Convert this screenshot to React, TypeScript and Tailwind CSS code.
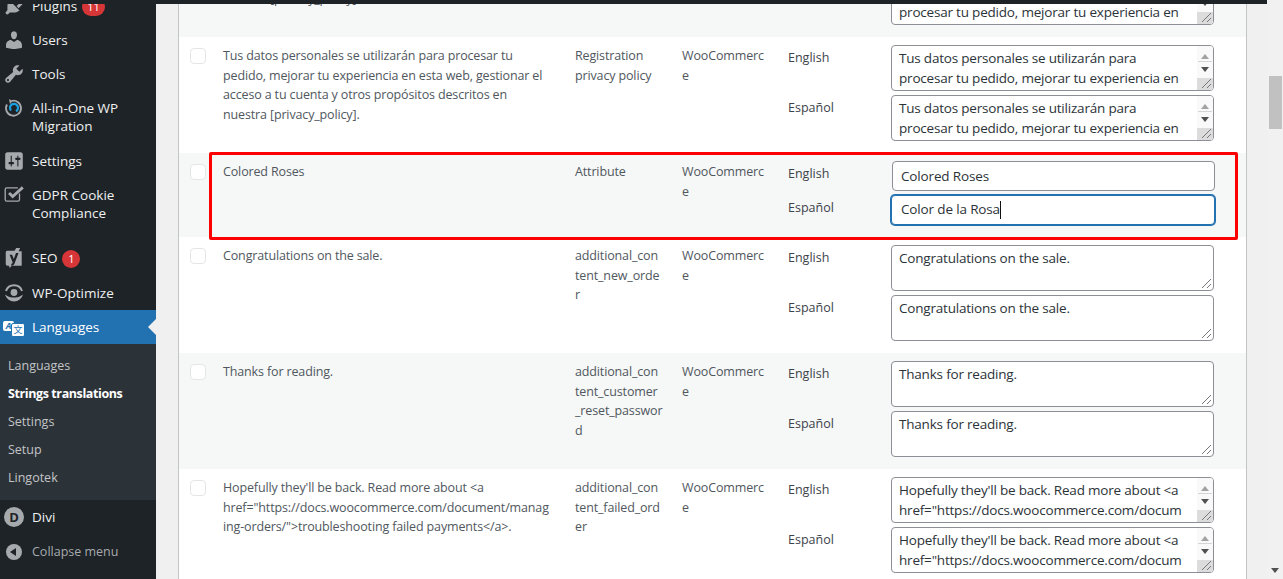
import { ReactNode } from "react"

const PERSONAL = "Tus datos personales se utilizarán para procesar tu pedido, mejorar tu experiencia en esta web, gestionar el acceso a tu cuenta y otros propósitos descritos en nuestra [privacy_policy]."
const HOPE = `Hopefully they'll be back. Read more about <a href="https://docs.woocommerce.com/document/managing-orders/">troubleshooting failed payments</a>.`

interface Row {
  text: string;
  name: string;
  en: string;
  es: string;
  kind: "scroll" | "plain" | "input";
  marked?: boolean;
}

// line feeds keep the long option names breaking where the admin table breaks them
const rows: Row[] = [
  { text: PERSONAL, name: "Checkout privacy policy", en: PERSONAL, es: PERSONAL, kind: "scroll" },
  { text: PERSONAL, name: "Registration privacy policy", en: PERSONAL, es: PERSONAL, kind: "scroll" },
  { text: "Colored Roses", name: "Attribute", en: "Colored Roses", es: "Color de la Rosa", kind: "input", marked: true },
  { text: "Congratulations on the sale.", name: "additional_con\ntent_new_orde\nr", en: "Congratulations on the sale.", es: "Congratulations on the sale.", kind: "plain" },
  { text: "Thanks for reading.", name: "additional_con\ntent_customer\n_reset_passwor\nd", en: "Thanks for reading.", es: "Thanks for reading.", kind: "plain" },
  { text: HOPE, name: "additional_con\ntent_failed_ord\ner", en: HOPE, es: HOPE, kind: "scroll" },
]

function Dash({ d }: { d: string }) {
  return (
    <svg viewBox="0 0 20 20" className="w-[22px] h-[22px] fill-[#a7aaad]">
      <path d={d} />
    </svg>
  )
}

const icons: Record<string, ReactNode> = {
  plugins: <Dash d="M13.11 4.36L9.87 7.6 8 5.73l3.24-3.24c.35-.34 1.05-.2 1.56.32.52.51.66 1.21.31 1.55zm-8 1.77l.91-1.12 9.01 9.01-1.19.84c-.71.71-2.63 1.16-3.82 1.16H6.14L4.9 17.26c-.59.59-1.54.59-2.12 0-.59-.58-.59-1.53 0-2.12l1.24-1.24v-3.88c0-1.13.4-3.19 1.09-3.89zm7.26 3.97l3.24-3.24c.34-.35 1.04-.21 1.55.31.52.51.66 1.21.31 1.55l-3.24 3.25z" />,
  users: <Dash d="M10 9.25c-2.27 0-2.73-3.44-2.73-3.44C7 4.02 7.82 2 9.97 2c2.16 0 2.98 2.02 2.71 3.81 0 0-.41 3.44-2.68 3.44zm0 2.57L12.72 10c2.39 0 4.52 2.33 4.52 4.53v2.49s-3.65 1.13-7.24 1.13c-3.65 0-7.24-1.13-7.24-1.13v-2.49c0-2.25 1.94-4.48 4.47-4.48z" />,
  tools: <Dash d="M16.68 9.77c-1.34 1.34-3.3 1.67-4.95.99l-5.41 6.52c-.99.99-2.59.99-3.58 0s-.99-2.59 0-3.57l6.52-5.42c-.68-1.65-.35-3.61.99-4.95 1.28-1.28 3.12-1.62 4.72-1.06l-2.89 2.89 2.82 2.82 2.86-2.87c.53 1.58.18 3.39-1.08 4.65zM3.81 16.21c.4.39 1.04.39 1.43 0 .4-.4.4-1.04 0-1.43-.39-.4-1.03-.4-1.43 0-.39.39-.39 1.03 0 1.43z" />,
  migration: (
    <svg viewBox="0 0 22 22" className="w-[22px] h-[22px] fill-none">
      <path d="M8.500 4a7.500 7.500 0 1 1-4.500 3.500" stroke="#a7aaad" strokeWidth="1.800" />
      <path d="M6 2l3.500 2L7 7z" fill="#a7aaad" />
      <path d="M8 13.500a4 4 0 1 1 5 .8" stroke="#1ba1e2" strokeWidth="2.200" />
    </svg>
  ),
  settings: <Dash d="M18 16V4c0-1.100-.9-2-2-2H4c-1.100 0-2 .9-2 2v12c0 1.100.9 2 2 2h12c1.100 0 2-.9 2-2zM8 11h1c.55 0 1 .45 1 1s-.45 1-1 1H8v1.500c0 .28-.22.5-.5.5s-.5-.22-.5-.5V13H6c-.55 0-1-.45-1-1s.45-1 1-1h1V5.500c0-.28.22-.5.5-.5s.5.22.5.5V11zm5-2h-1c-.55 0-1-.45-1-1s.45-1 1-1h1V5.500c0-.28.22-.5.5-.5s.5.22.5.5V7h1c.55 0 1 .45 1 1s-.45 1-1 1h-1v5.500c0 .28-.22.5-.5.5s-.5-.22-.5-.5V9z" />,
  gdpr: (
    <svg viewBox="0 0 20 20" className="w-[22px] h-[22px] fill-none -mt-[1px]">
      <path d="M15 9.500v5.500a1.500 1.500 0 0 1-1.500 1.500h-10A1.500 1.500 0 0 1 2 15v-9A1.500 1.500 0 0 1 3.500 4.500h10" stroke="#a7aaad" strokeWidth="1.200" />
      <path d="M5.500 9l3.300 3.300L18 4" stroke="#a7aaad" strokeWidth="2.600" />
    </svg>
  ),
  seo: (
    <svg viewBox="0 0 20 20" className="w-[22px] h-[22px]">
      <path d="M4 3.500h6.500L12 1h3.500l-1.200 2.800H17V17H8l-2 2-.500-2H4C3 17 2.500 16 2.500 15.500V5c0-1 .7-1.500 1.500-1.500z" fill="#a7aaad" />
      <path d="M6 7h2.300l1.500 4 2-5.500h2.300L10.500 15c-.6 1.500-1.500 2-3 2v-1.800c.8 0 1.100-.4 1.300-1.100z" fill="#1d2327" />
    </svg>
  ),
  optimize: (
    <svg viewBox="0 0 22 22" className="w-[22px] h-[22px] fill-none">
      <path d="M3 9a8.500 8.500 0 0 1 16 0" stroke="#a7aaad" strokeWidth="2" />
      <path d="M2 12.500a9.300 9.300 0 0 0 18 0c-2 1.300-4 3-9 3s-7-1.700-9-3z" fill="#a7aaad" />
      <circle cx="11" cy="10.500" r="3.400" fill="#a7aaad" />
    </svg>
  ),
}

function LangIcon() {
  return (
    <span className="relative block w-[22px] h-[16px]">
      <span className="absolute left-0 top-0 w-[11px] h-[10px] bg-white rounded-[2px] text-[#2271b1] text-[9px] leading-[10px] text-center font-bold italic">A</span>
      <span className="absolute left-[8px] top-[2px] w-[12px] h-[12px] bg-white rounded-[2px] border border-[#2271b1] box-content text-[#2271b1] text-[9px] leading-[12px] text-center font-['Noto_Sans_CJK_SC',sans-serif]">文</span>
    </span>
  )
}

function MenuItem({ icon, label, badge, h = "h-[34px]" }: { icon: ReactNode; label: string; badge?: string; h?: string }) {
  return (
    <div className={`flex ${h} pl-[3px] text-[#f0f0f1]`}>
      <div className="w-[29px] shrink-0 pt-[6px]">{icon}</div>
      <div className="pt-[8px] leading-[18px] pr-2">
        {label}
        {badge && (
          <span className="ml-[5px] mt-px inline-block min-w-[18px] h-[18px] px-[5px] rounded-full bg-[#d63638] text-white text-[11px] leading-[18px] text-center align-top">{badge}</span>
        )}
      </div>
    </div>
  )
}

function Sidebar() {
  return (
    <aside className="w-[156px] shrink-0 bg-[#1d2327] text-[13.5px] overflow-hidden">
      <div className="-mt-[11px]">
        <MenuItem icon={icons.plugins} label="Plugins" badge="11" />
        <MenuItem icon={icons.users} label="Users" />
        <MenuItem icon={icons.tools} label="Tools" />
        <MenuItem icon={icons.migration} label="All-in-One WP Migration" h="h-[53px]" />
        <MenuItem icon={icons.settings} label="Settings" />
        <MenuItem icon={icons.gdpr} label="GDPR Cookie Compliance" h="h-[63px]" />
        <MenuItem icon={icons.seo} label="SEO" badge="1" />
        <div className="h-px" />
        <MenuItem icon={icons.optimize} label="WP-Optimize" />
        <div className="relative h-[34px] bg-[#2271b1] text-white flex pl-[3px]">
          <div className="w-[29px] pt-[11px]"><LangIcon /></div>
          <div className="pt-[8px] leading-[18px]">Languages</div>
          <div className="absolute right-0 top-[9px] border-y-[8px] border-y-transparent border-r-[8px] border-r-[#f0f0f1]" />
        </div>
        <div className="bg-[#2c3338] pt-[8px] text-[12.5px] text-[#c3c4c7] h-[156px]">
          {["Languages", "Strings translations", "Settings", "Setup", "Lingotek"].map((s) => (
            <div key={s} className={`h-[28px] pl-2 leading-[28px] ${s === "Strings translations" ? "font-bold text-white tracking-[-0.4px]" : ""}`}>{s}</div>
          ))}
        </div>
        <div className="flex h-[34px] items-center pl-1 text-[#f0f0f1]">
          <div className="w-[20px] h-[20px] rounded-full bg-[#a7aaad] text-[#1d2327] text-[13px] font-bold leading-[20px] text-center">D</div>
          <span className="ml-2">Divi</span>
        </div>
        <div className="flex h-[34px] items-center pl-[6px] pt-[2px] text-[12.5px] text-[#a7aaad]">
          <div className="w-4 h-4 rounded-full bg-[#a7aaad] flex items-center justify-center">
            <div className="border-y-[4px] border-y-transparent border-r-[6px] border-r-[#1d2327] -ml-[2px]" />
          </div>
          <span className="ml-[10px]">Collapse menu</span>
        </div>
      </div>
    </aside>
  )
}

function Resizer() {
  return (
    <svg viewBox="0 0 12 12" className="absolute right-[1px] bottom-[1px] w-3 h-3 stroke-[#777] fill-none">
      <path d="M2 11L11 2M7 11l4-4" />
    </svg>
  )
}

function TextBox({ value, scroll }: { value: string; scroll: boolean }) {
  return (
    <div className="relative w-[323px] h-[46px] rounded-[4px] border border-[#8c8f94] bg-white overflow-hidden">
      <textarea
        readOnly
        value={value}
        className={`block h-full ${scroll ? "w-[295px]" : "w-full"} pl-[7px] py-[2px] text-[13.5px] tracking-[-0.2px] leading-[20px] text-[#2c3338] bg-transparent resize-none overflow-hidden outline-none`}
      />
      {scroll && (
        <div className="absolute right-0 top-0 bottom-0 w-4 bg-[#f9f9f9] flex flex-col items-center">
          <div className="mt-[8px] border-x-[4px] border-x-transparent border-b-[5px] border-b-[#a3a3a3]" />
          <div className="mt-[2px] h-px w-[14px] bg-[#d4d4d4]" />
          <div className="mt-[5px] border-x-[4px] border-x-transparent border-t-[5px] border-t-[#505050]" />
          <div className="mt-[6px] flex-1 w-full bg-[#dcdcdc]" />
        </div>
      )}
      <Resizer />
    </div>
  )
}

function LangRow({ label, children }: { label: string; children: ReactNode }) {
  return (
    <div className="flex">
      <div className="w-[103px] shrink-0 pt-[3px] text-[12.5px] leading-[20px] text-[#3c434a]">{label}</div>
      {children}
    </div>
  )
}

function RowView({ row }: { row: Row }) {
  return (
    <div className="relative flex odd:bg-[#f6f7f7] even:bg-white text-[12.5px] tracking-[-0.14px] leading-[19.5px] text-[#50575e]">
      <div className="w-[44px] shrink-0 pl-[11px] pt-[11px]">
        <div className="w-4 h-4 rounded-[4px] border border-[#e4e5e6] bg-white" />
      </div>
      <div className="w-[352px] shrink-0 pt-[9px] pr-[25px] [overflow-wrap:anywhere]">{row.text}</div>
      <div className="w-[107px] shrink-0 pt-[9px] pr-[14px] whitespace-pre-line">{row.name}</div>
      <div className="w-[106px] shrink-0 pt-[9px] pr-[18px] [overflow-wrap:anywhere]">WooCommerce</div>
      <div className="flex flex-col gap-1 pt-2 pb-3 tracking-normal">
        {row.kind === "input" ? (
          <>
            <LangRow label="English">
              <input readOnly value={row.en} className="ml-[1px] w-[323px] h-[30px] rounded-[4px] border border-[#8c8f94] bg-white px-[8px] text-[13.5px] tracking-[-0.15px] text-[#2c3338] outline-none" />
            </LangRow>
            <LangRow label="Español">
              <div className="flex items-center w-[324px] h-[30px] rounded-[4px] border border-[#2271b1] shadow-[0_0_0_1px_#2271b1] bg-white px-[9px] text-[13.5px] tracking-[-0.15px] text-[#2c3338]">
                <span>{row.es}</span>
                <span className="w-px h-[18px] bg-[#111]" />
              </div>
            </LangRow>
          </>
        ) : (
          <>
            <LangRow label="English"><TextBox value={row.en} scroll={row.kind === "scroll"} /></LangRow>
            <LangRow label="Español"><TextBox value={row.es} scroll={row.kind === "scroll"} /></LangRow>
          </>
        )}
      </div>
      {row.marked && (
        <div className="absolute z-10 left-[30px] -top-px w-[1029px] h-[88px] border-[3px] border-[#f00] rounded-[2px] pointer-events-none" />
      )}
    </div>
  )
}

export default function App() {
  return (
    <div className="relative flex h-[579px] overflow-hidden bg-[#f0f0f1] font-['Open_Sans','Noto_Sans',sans-serif]">
      <Sidebar />
      <main className="flex-1 pl-[22px] pr-[20px] overflow-hidden">
        <div className="-mt-[79px] border-x border-[#c3c4c7] bg-white">
          {rows.map((row, i) => <RowView key={i} row={row} />)}
        </div>
      </main>
      {/* page scrollbar */}
      <div className="relative w-4 shrink-0 bg-[#f1f1f1]">
        <div className="absolute left-[2px] top-[76px] w-[13px] h-[53px] bg-[#c1c1c1]" />
        <div className="absolute left-[4px] bottom-[6px] border-x-[4px] border-x-transparent border-t-[5px] border-t-[#505050]" />
      </div>
      <div className="absolute z-20 left-0 top-0 w-[1267px] h-1 bg-[#1d2327]" />
    </div>
  )
}
